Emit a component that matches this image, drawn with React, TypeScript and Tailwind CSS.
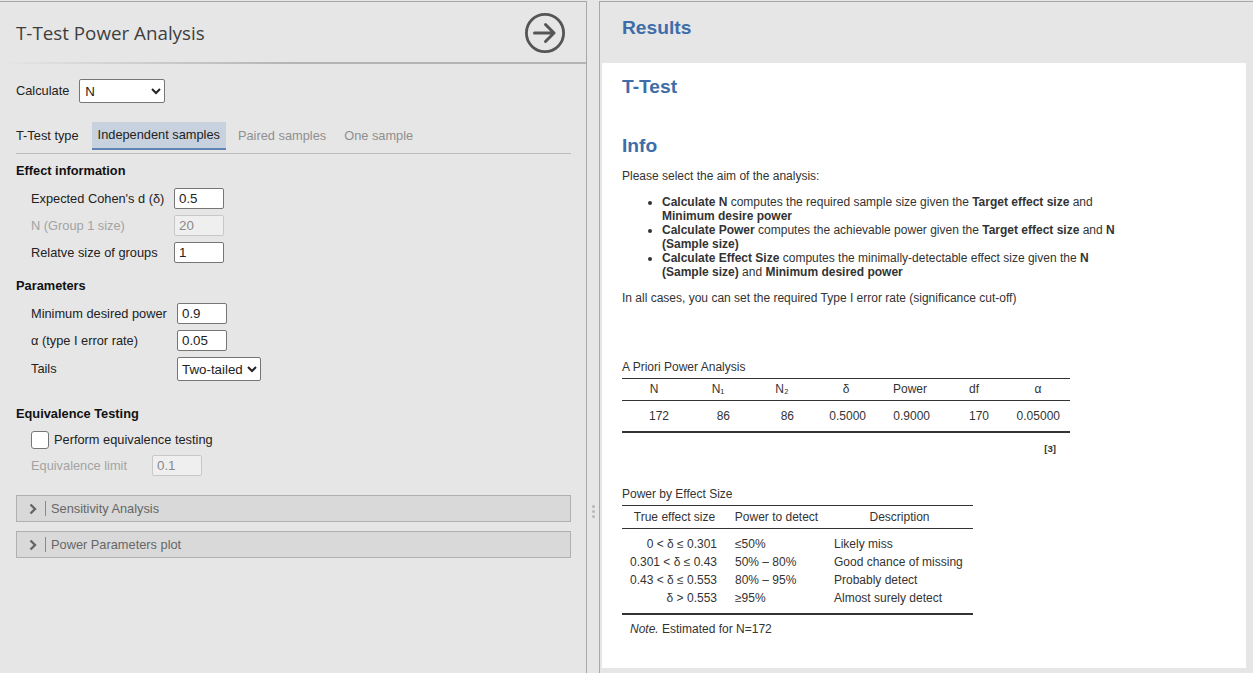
const sans = "font-['Liberation_Sans',Arial,sans-serif]";

function NumInput({ value, disabled }: { value: string; disabled?: boolean }) {
  return (
    <input
      readOnly
      disabled={disabled}
      value={value}
      className={
        "w-[50px] h-[21px] rounded-[2px] border px-1 text-[13.33px] leading-none outline-none " +
        (disabled
          ? "bg-[#efefef] border-[#c8c8c8] text-[#8a8a8a]"
          : "bg-white border-[#767676] text-[#222]")
      }
    />
  );
}

function Collapsed({ title }: { title: string }) {
  return (
    <div className="mx-4 flex h-[27px] w-[555px] items-center border border-[#b0b0b0] bg-[#d9d9d9] pl-[11px] text-[12.8px] text-[#666]">
      <svg width="10" height="12" viewBox="0 0 10 12" className="mt-px">
        <path d="M2.5 1.5 L7 6 L2.5 10.5" fill="none" stroke="#666" strokeWidth="2.4" />
      </svg>
      <span className="ml-[7px] h-[15px] w-px bg-[#8a8a8a]" />
      <span className="ml-[5px]">{title}</span>
    </div>
  );
}

function LeftPanel() {
  return (
    <div className="flex w-[587px] shrink-0 flex-col border-r border-t border-[#a8a8a8] text-[12.8px] text-[#222]">
      <div className="relative flex h-[60px] shrink-0 items-center pl-4 pr-[20px] pt-[2px]">
        <h1 className="flex-1 font-['Open_Sans',sans-serif] text-[18.8px] font-normal text-[#3e3e3e]">T-Test Power Analysis</h1>
        <svg width="42" height="42" viewBox="0 0 42 42">
          <circle cx="21" cy="21" r="18.6" fill="none" stroke="#555" strokeWidth="2.8" />
          <path d="M10.5 21 H30 M21.5 12.5 L30 21 L21.5 29.5" fill="none" stroke="#555" strokeWidth="3" strokeLinecap="round" strokeLinejoin="round" />
        </svg>
      </div>
      <div className="h-[2px] shrink-0 bg-linear-to-r from-[#e6e6e6] via-[#b4b4b4] to-[#b4b4b4]" />

      <div className="mt-[15px] flex h-6 items-center pl-4">
        <span className="mr-[10px]">Calculate</span>
        <select className="h-6 w-[86px] rounded-[2px] border border-[#767676] bg-white pl-[1px] text-[13.33px] text-[#222] outline-none">
          <option>N</option>
        </select>
      </div>

      <div className="mx-4 mt-[19px] flex h-[32px] w-[555px] border-b border-[#bdbdbd] pb-[3px]">
        <span className="flex items-center pr-[13px]">T-Test type</span>
        <span className="flex items-center border-b-2 border-[#5f84b3] bg-[#c8d2de] px-[6px]">Independent samples</span>
        <span className="ml-[6px] flex items-center px-[6px] text-[#8f8f8f]">Paired samples</span>
        <span className="ml-[6px] flex items-center px-[6px] text-[#8f8f8f]">One sample</span>
      </div>

      <div className="mt-[8px] pl-4 font-bold leading-[17px] text-[#111]">Effect information</div>
      <div className="mt-[9px] flex flex-col gap-[6px] pl-[31px]">
        <div className="flex items-center">
          <span className="w-[143px]">Expected Cohen's d (δ)</span>
          <NumInput value="0.5" />
        </div>
        <div className="flex items-center">
          <span className="w-[143px] text-[#a3a3a3]">N (Group 1 size)</span>
          <NumInput value="20" disabled />
        </div>
        <div className="flex items-center">
          <span className="w-[143px]">Relatve size of groups</span>
          <NumInput value="1" />
        </div>
      </div>

      <div className="mt-[14px] pl-4 font-bold leading-[17px] text-[#111]">Parameters</div>
      <div className="mt-[9px] flex flex-col gap-[6px] pl-[31px]">
        <div className="flex items-center">
          <span className="w-[146px]">Minimum desired power</span>
          <NumInput value="0.9" />
        </div>
        <div className="flex items-center">
          <span className="w-[146px]">α (type I error rate)</span>
          <NumInput value="0.05" />
        </div>
        <div className="flex items-center">
          <span className="w-[146px]">Tails</span>
          <select className="h-6 w-[84px] rounded-[2px] border border-[#767676] bg-white text-[13.33px] text-[#222] outline-none">
            <option>Two-tailed</option>
          </select>
        </div>
      </div>

      <div className="mt-6 pl-4 font-bold leading-[17px] text-[#111]">Equivalence Testing</div>
      <div className="mt-[9px] flex h-[18px] items-center pl-[31px]">
        <span className="h-[18px] w-[18px] rounded-[3px] border border-[#767676] bg-white" />
        <span className="ml-[5px]">Perform equivalence testing</span>
      </div>
      <div className="mt-[6px] flex items-center pl-[31px]">
        <span className="w-[121px] text-[#a3a3a3]">Equivalence limit</span>
        <NumInput value="0.1" disabled />
      </div>

      <div className="mt-[19px] flex flex-col gap-[9px]">
        <Collapsed title="Sensitivity Analysis" />
        <Collapsed title="Power Parameters plot" />
      </div>
    </div>
  );
}

function Splitter() {
  return (
    <div className="flex w-3 shrink-0 flex-col items-center pt-[504px]">
      <div className="flex flex-col gap-[2px]">
        <span className="h-[3px] w-[3px] rounded-full bg-[#b8b8b8]" />
        <span className="h-[3px] w-[3px] rounded-full bg-[#b8b8b8]" />
        <span className="h-[3px] w-[3px] rounded-full bg-[#b8b8b8]" />
      </div>
    </div>
  );
}

function PowerTable() {
  return (
    <table className="w-[448px] table-fixed border-collapse text-[12px] leading-[18px] text-[#333]">
      <caption className="h-[18px] text-left leading-[14px]">A Priori Power Analysis</caption>
      <thead>
        <tr className="h-[22px] border-y border-[#333]">
          {["N", "N₁", "N₂", "δ", "Power", "df", "α"].map((h) => (
            <th key={h} className="w-16 pb-[2px] font-normal">{h}</th>
          ))}
        </tr>
      </thead>
      <tbody>
        <tr className="h-[31px] border-b-2 border-[#333]">
          <td className="pr-[17px] text-right">172</td>
          <td className="pr-[20px] text-right">86</td>
          <td className="pr-[20px] text-right">86</td>
          <td className="pr-[12px] text-right">0.5000</td>
          <td className="pr-[12px] text-right">0.9000</td>
          <td className="pr-[17px] text-right">170</td>
          <td className="pr-[10px] text-right">0.05000</td>
        </tr>
      </tbody>
    </table>
  );
}

const effectRows = [
  ["0 < δ ≤ 0.301", "≤50%", "Likely miss"],
  ["0.301 < δ ≤ 0.43", "50% – 80%", "Good chance of missing"],
  ["0.43 < δ ≤ 0.553", "80% – 95%", "Probably detect"],
  ["δ > 0.553", "≥95%", "Almost surely detect"],
];

function EffectTable() {
  return (
    <table className="mt-[32px] w-[351px] table-fixed border-collapse text-[12px] leading-[18px] text-[#333]">
      <caption className="h-[18px] text-left leading-[14px]">Power by Effect Size</caption>
      <thead>
        <tr className="h-[23px] border-y border-[#333]">
          <th className="w-[105px] font-normal">True effect size</th>
          <th className="w-[99px] font-normal">Power to detect</th>
          <th className="w-[147px] font-normal">Description</th>
        </tr>
      </thead>
      <tbody>
        {effectRows.map((r, i) => (
          <tr key={r[0]} className={i === 0 ? "h-[25px] align-bottom" : i === 3 ? "h-[25px] align-top" : "h-[18px]"}>
            <td className="pr-[10px] text-right">{r[0]}</td>
            <td className="pl-[8px]">{r[1]}</td>
            <td className="pl-[8px]">{r[2]}</td>
          </tr>
        ))}
      </tbody>
      <tfoot>
        <tr className="border-t-2 border-[#333]">
          <td colSpan={3} className="h-[28px] pl-2 align-middle"><i>Note.</i> Estimated for N=172</td>
        </tr>
      </tfoot>
    </table>
  );
}

function RightPanel() {
  return (
    <div className="flex min-w-0 flex-1 flex-col border-l border-t border-[#a8a8a8]">
      <div className="flex h-[61px] shrink-0 items-start pl-[22px] pt-[14px]">
        <h2 className="text-[19.2px] font-bold leading-[24px] text-[#3e6da9]">Results</h2>
      </div>
      <div className="mb-[5px] ml-[2px] mr-[7px] flex-1 bg-white pl-5 text-[12px] text-[#333]">
        <h2 className="mt-[12px] text-[19.2px] font-bold leading-[24px] text-[#3e6da9]">T-Test</h2>
        <h2 className="mt-[35px] text-[19.2px] font-bold leading-[24px] text-[#3e6da9]">Info</h2>
        <div className="w-[500px]">
          <p className="mt-[11px] leading-[14px]">Please select the aim of the analysis:</p>
          <ul className="mt-[12px] list-disc pl-10 leading-[14px]">
            <li><b>Calculate N</b> computes the required sample size given the <b>Target effect size</b> and <b>Minimum desire power</b></li>
            <li><b>Calculate Power</b> computes the achievable power given the <b>Target effect size</b> and <b>N (Sample size)</b></li>
            <li><b>Calculate Effect Size</b> computes the minimally-detectable effect size given the <b>N (Sample size)</b> and <b>Minimum desired power</b></li>
          </ul>
          <p className="mt-[12px] leading-[14px]">In all cases, you can set the required Type I error rate (significance cut-off)</p>
        </div>
        <div className="mt-[55px]">
          <PowerTable />
          <div className="mt-[10px] w-[434px] text-right text-[9.6px] font-bold leading-[12px]">[3]</div>
          <EffectTable />
        </div>
      </div>
    </div>
  );
}

export default function App() {
  return (
    <div className={"flex h-[673px] w-[1253px] overflow-hidden bg-[#e6e6e6] pt-px " + sans}>
      <LeftPanel />
      <Splitter />
      <RightPanel />
    </div>
  );
}
